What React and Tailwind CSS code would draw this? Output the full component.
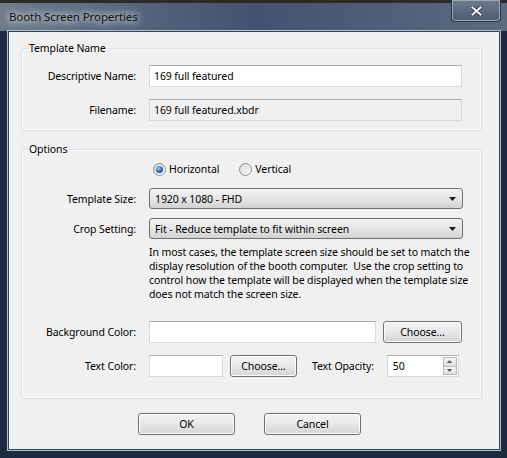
import React from "react";

// Win7-ish dialog: Booth Screen Properties

function TextBox({ value = "", readOnly = false, className = "" }) {
  return (
    <div
      className={`h-[22px] flex items-center px-[4px] border border-[#d5d8de] border-t-[#abadb3] ${
        readOnly ? "bg-[#f0f0f0]" : "bg-white"
      } ${className}`}
    >
      {value}
    </div>
  );
}

function DropArrow() {
  return (
    <svg width="7" height="4" viewBox="0 0 7 4" className="ml-auto mr-[6px]">
      <path d="M0 0 H7 L3.5 4 Z" fill="#1a1a1a" />
    </svg>
  );
}

function Select({ value }) {
  return (
    <div className="w-[314px] h-[21px] flex items-center pl-[5px] rounded-[3px] border border-[#707070] bg-linear-to-b from-[#f2f2f2] via-[#e6e6e6] to-[#d2d2d2]">
      <span>{value}</span>
      <DropArrow />
    </div>
  );
}

function Button({ children, className = "" }) {
  return (
    <button
      className={`h-[22px] flex items-center justify-center rounded-[3px] border border-[#707070] bg-linear-to-b from-[#f3f3f3] via-[#e8e8e8] to-[#d4d4d4] shadow-[inset_0_0_0_1px_#fcfcfc] ${className}`}
    >
      {children}
    </button>
  );
}

function Radio({ checked, label }) {
  return (
    <div className="flex items-center gap-[3px]">
      <span className="w-[13px] h-[13px] rounded-full border border-[#8f8f8f] bg-linear-to-br from-[#d8d8d8] to-[#fbfbfb] flex items-center justify-center">
        {checked && (
          <span className="w-[7px] h-[7px] rounded-full bg-[radial-gradient(circle_at_40%_35%,#9fd2f4,#1d6aa8_55%,#0f3d66)]" />
        )}
      </span>
      <span>{label}</span>
    </div>
  );
}

function Row({ label, children, className = "" }) {
  return (
    <div className={`flex items-center ${className}`}>
      <div className="w-[114px] text-right">{label}</div>
      <div className="ml-[13px] flex items-center">{children}</div>
    </div>
  );
}

function Spinner({ value }) {
  return (
    <div className="w-[72px] h-[22px] flex border border-[#d5d8de] border-t-[#abadb3] bg-white">
      <span className="pl-[5px] self-center">{value}</span>
      <div className="ml-auto flex flex-col w-[14px] my-[1px] mr-[1px]">
        <span className="flex-1 flex items-center justify-center border border-[#b6b9bf] bg-linear-to-b from-[#f4f4f4] to-[#dedede]">
          <svg width="5" height="3" viewBox="0 0 5 3">
            <path d="M0 3 L2.5 0 L5 3 Z" fill="#555" />
          </svg>
        </span>
        <span className="flex-1 flex items-center justify-center border border-t-0 border-[#b6b9bf] bg-linear-to-b from-[#f4f4f4] to-[#dedede]">
          <svg width="5" height="3" viewBox="0 0 5 3">
            <path d="M0 0 L5 0 L2.5 3 Z" fill="#555" />
          </svg>
        </span>
      </div>
    </div>
  );
}

export default function App() {
  return (
    <div className="w-[507px] h-[458px] flex flex-col bg-[#1e2b3f] font-['Noto_Sans','Open_Sans',sans-serif] text-[10.5px] tracking-[-0.1px] text-black leading-[16px] overflow-hidden">
      {/* title bar */}
      <div className="h-[31px] flex items-start border-t-[3px] border-[#2d2a2c] bg-linear-to-r from-[#6f7b8b] via-[#425270] to-[#5c6b82]">
        <div className="pl-[9px] pt-[6px] text-[11.5px] text-[#111] [text-shadow:0_0_6px_#e8edf2,0_0_10px_#dfe6ee]">
          Booth Screen Properties
        </div>
        <div className="ml-auto mr-[6px] mt-[-3px] w-[50px] h-[22px] flex items-center justify-center rounded-b-[4px] border border-t-0 border-[#2a3548] shadow-[inset_0_0_0_1px_#9aa6b6] bg-linear-to-b from-[#6d7a8e] to-[#4e5c72]">
          <svg width="11" height="10" viewBox="0 0 11 10">
            <path
              d="M1.5 1.5 L9.5 8.5 M9.5 1.5 L1.5 8.5"
              stroke="#2a3344"
              strokeWidth="3.6"
              strokeLinecap="square"
            />
            <path
              d="M1.5 1.5 L9.5 8.5 M9.5 1.5 L1.5 8.5"
              stroke="#f4f6f8"
              strokeWidth="2"
              strokeLinecap="square"
            />
          </svg>
        </div>
      </div>

      {/* client area */}
      <div className="ml-[8px] w-[492px] h-[419px] border border-[#34435a] shadow-[0_0_0_1px_#b3bfcd] bg-[#f0f0f0] flex flex-col">
        <fieldset className="ml-[12px] mt-[8px] w-[461px] border border-[#d5dfe5] rounded-[3px] pt-[9px] pb-[9px] shadow-[inset_0_0_0_1px_#fbfbfb]">
          <legend className="ml-[6px] px-[1px]">Template Name</legend>
          <Row label="Descriptive Name:">
            <TextBox value="169 full featured" className="w-[313px]" />
          </Row>
          <Row label="Filename:" className="mt-[12px]">
            <TextBox value="169 full featured.xbdr" readOnly className="w-[313px]" />
          </Row>
        </fieldset>

        <fieldset className="ml-[12px] mt-[10px] w-[461px] border border-[#d5dfe5] rounded-[3px] pt-[4px] pb-[21px] shadow-[inset_0_0_0_1px_#fbfbfb]">
          <legend className="ml-[6px] px-[1px]">Options</legend>
          <div className="ml-[131px] flex items-center gap-[20px]">
            <Radio checked label="Horizontal" />
            <Radio label="Vertical" />
          </div>
          <Row label="Template Size:" className="mt-[11px]">
            <Select value="1920 x 1080 - FHD" />
          </Row>
          <Row label="Crop Setting:" className="mt-[9px]">
            <Select value="Fit - Reduce template to fit within screen" />
          </Row>
          <p className="ml-[127px] mt-[6px] leading-[14px] whitespace-nowrap">
            In most cases, the template screen size should be set to match the
            <br />
            display resolution of the booth computer.&nbsp; Use the crop setting to
            <br />
            control how the template will be displayed when the template size
            <br />
            does not match the screen size.
          </p>
          <Row label="Background Color:" className="mt-[20px]">
            <TextBox className="w-[227px]" />
            <Button className="ml-[7px] w-[79px]">Choose...</Button>
          </Row>
          <Row label="Text Color:" className="mt-[12px]">
            <TextBox className="w-[74px]" />
            <Button className="ml-[7px] w-[67px]">Choose...</Button>
            <span className="ml-[15px]">Text Opacity:</span>
            <span className="ml-[13px]">
              <Spinner value="50" />
            </span>
          </Row>
        </fieldset>

        <div className="mt-[14px] pl-[129px] flex gap-[29px]">
          <Button className="w-[97px]">OK</Button>
          <Button className="w-[97px]">Cancel</Button>
        </div>
      </div>
    </div>
  );
}
